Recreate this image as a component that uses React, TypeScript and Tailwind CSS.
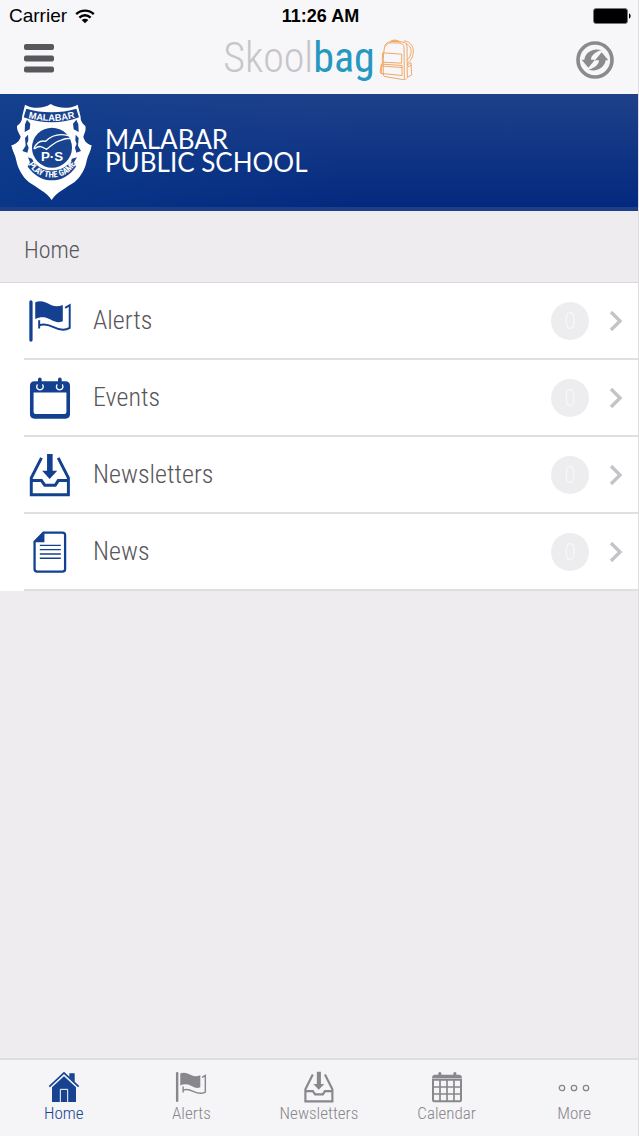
import type { ReactNode } from 'react';

interface IconProps {
  className?: string;
}

function WifiIcon({ className }: IconProps) {
  return (
    <svg className={className} viewBox="0 0 20 15" fill="none" stroke="currentColor" strokeWidth="2.4" aria-hidden="true">
      <path d="M1.2 5.2C6 0.4 14 0.4 18.8 5.2" />
      <path d="M4.4 8.6C7.6 5.5 12.4 5.5 15.6 8.6" />
      <path d="M10 14.2L6.7 10.9C8.6 9.2 11.4 9.2 13.3 10.9Z" fill="currentColor" stroke="none" />
    </svg>
  );
}

function BatteryIcon({ className }: IconProps) {
  return (
    <svg className={className} viewBox="0 0 39 16" aria-hidden="true">
      <rect x="0.5" y="0.5" width="34" height="15" rx="2.5" fill="#000" stroke="#77767a" />
      <path d="M36 5.5C38.2 6 38.2 10 36 10.5Z" fill="#000" />
    </svg>
  );
}

function MenuIcon({ className }: IconProps) {
  return (
    <svg className={className} viewBox="0 0 30 29" fill="currentColor" aria-hidden="true">
      <rect width="30" height="6" rx="2" />
      <rect y="11.5" width="30" height="6" rx="2" />
      <rect y="22.5" width="30" height="6" rx="2" />
    </svg>
  );
}

function RefreshIcon({ className }: IconProps) {
  return (
    <svg className={className} viewBox="0 0 114 114" aria-hidden="true">
      <circle cx="57" cy="57" r="51" fill="none" stroke="currentColor" strokeWidth="11" />
      <g fill="currentColor">
        <path d="M76 28C52 20 28 34 25 56H17L37 80L57 56H45C45 44 58 32 76 28Z" />
        <path d="M38 86C62 94 86 80 89 58H97L77 34L57 58H69C69 70 56 82 38 86Z" />
      </g>
    </svg>
  );
}

function BackpackIcon({ className }: IconProps) {
  return (
    <svg className={className} viewBox="504 116 108 128" fill="none" stroke="#efa35c" strokeWidth="2.8" strokeLinejoin="round" strokeLinecap="round" aria-hidden="true">
      <path d="M517 224C516 196 516 164 521 140C524 130 533 126 545 126L572 127C583 128 588 133 588 142L589 234C586 239 581 241 574 240L522 231C518 230 517 228 517 224Z" />
      <path d="M524 140C528 131 536 130 548 130L566 131C574 132 579 136 579 144L580 236" />
      <path d="M538 126C541 120 560 120 567 127M544 125C549 123 556 123 561 126" />
      <path d="M516 160L572 164V191L515 188Z" />
      <path d="M514 194L573 198V228L512 222Z" />
      <path d="M514 200L573 204M516 189L511 194L507 219L513 223" />
      <path d="M580 124C596 126 607 138 607 155C607 171 601 181 590 191M586 133C596 137 601 146 600 158C599 169 595 175 589 181" />
      <path d="M589 196L600 190L602 226L590 233M592 201L600 198" />
    </svg>
  );
}

function FlagIcon({ className }: IconProps) {
  return (
    <svg className={className} viewBox="84 252 134 134" aria-hidden="true">
      <path d="M93 261V377" stroke="currentColor" strokeWidth="10" strokeLinecap="round" />
      <path d="M106 262C122 255 137 261 151 269C164 276 177 275 190 270V320C176 326 165 322 151 314C136 306 121 306 106 313Z" fill="currentColor" />
      <path d="M197 279L211 271V340C194 350 176 345 160 337C144 329 131 327 118 332M118 317V342" fill="none" stroke="currentColor" strokeWidth="6" />
    </svg>
  );
}

function EventIcon({ className }: IconProps) {
  return (
    <svg className={className} viewBox="84 482 134 134" aria-hidden="true">
      <path fillRule="evenodd" fill="currentColor" d="M104 498H198Q212 498 212 512V598Q212 612 198 612H104Q90 612 90 598V512Q90 498 104 498ZM101 532V592Q101 598 107 598H195Q201 598 201 592V532Z" />
      <g fill="none" strokeLinecap="round">
        <path d="M112 509C108 518 113 524 120 524C128 524 133 518 129 509M172 509C168 518 173 524 180 524C188 524 193 518 189 509" stroke="#fff" strokeWidth="4" />
        <path d="M120 492V510M181 492V510" stroke="currentColor" strokeWidth="11" />
      </g>
    </svg>
  );
}

function InboxIcon({ className }: IconProps) {
  return (
    <svg className={className} viewBox="84 54 134 134" aria-hidden="true">
      <g fill="none" stroke="currentColor" strokeWidth="9">
        <path d="M125 69L94 130V181H207V130L176 69" />
        <path d="M94 138H125L135 152H167L176 138H207" />
      </g>
      <path d="M142 57H159V108H173L150 133L127 108H142Z" fill="currentColor" />
    </svg>
  );
}

function DocumentIcon({ className }: IconProps) {
  return (
    <svg className={className} viewBox="84 284 134 134" aria-hidden="true">
      <path d="M131 292H189Q197 292 197 300V403Q197 411 189 411H112Q104 411 104 403V320Z" fill="none" stroke="currentColor" strokeWidth="7" />
      <path d="M134 289V321H102Z" fill="currentColor" />
      <path d="M120 331H184M120 344H184M120 357H184M120 370H184" stroke="currentColor" strokeWidth="4" />
    </svg>
  );
}

function HouseIcon({ className }: IconProps) {
  return (
    <svg className={className} viewBox="147 66 96 96" aria-hidden="true">
      <path d="M211 73H227V100L211 84Z" fill="currentColor" />
      <path d="M151 113L195 72L239 113" fill="none" stroke="currentColor" strokeWidth="5" />
      <path d="M195 82L231 115V159H159V115Z" fill="currentColor" />
      <path d="M184 159V121H206V159" fill="none" stroke="#fff" strokeWidth="3" />
    </svg>
  );
}

function CalendarIcon({ className }: IconProps) {
  return (
    <svg className={className} viewBox="39 65 96 96" aria-hidden="true">
      <path d="M42 87Q42 76 51 76H61V71Q66 65 70 71V76H106V71Q111 65 115 71V76H123Q132 76 132 87Z" fill="currentColor" />
      <path d="M45 91H129V151Q129 156 123 156H51Q45 156 45 151Z" fill="none" stroke="currentColor" strokeWidth="6" />
      <path d="M66 91V156M87 91V156M108 91V156M45 113H129M45 134H129" stroke="currentColor" strokeWidth="5" />
    </svg>
  );
}

function MoreIcon({ className }: IconProps) {
  return (
    <svg className={className} viewBox="0 0 32 32" fill="none" stroke="currentColor" strokeWidth="1.3" aria-hidden="true">
      <circle cx="4" cy="17" r="2.7" />
      <circle cx="16" cy="17" r="2.7" />
      <circle cx="28" cy="17" r="2.7" />
    </svg>
  );
}

function ChevronIcon({ className }: IconProps) {
  return (
    <svg className={className} viewBox="0 0 14 20" fill="none" stroke="currentColor" strokeWidth="3.4" aria-hidden="true">
      <path d="M2 1L11 10L2 19" />
    </svg>
  );
}

function SchoolCrest({ className }: IconProps) {
  return (
    <svg className={className} viewBox="0 0 264 312" role="img" aria-label="Malabar Public School crest">
      <path
        fill="#fff"
        d="M51 17C77 31 106 29 128 15C152 29 182 31 209 17L218 54C217 66 224 74 232 81C235 94 229 104 226 113C229 128 240 136 251 139C249 156 240 168 236 185C232 209 219 232 199 250C174 267 145 281 131 303C116 281 88 267 63 250C43 232 30 209 25 185C22 168 13 156 10 139C22 136 34 128 38 113C34 104 26 94 27 81C36 74 43 66 42 54Z"
      />
      <g fill="#17438f">
        <path d="M55 29C100 43 160 43 205 29L213 55C162 75 100 75 47 55Z" />
        <path d="M57 62L67 74L65 91L50 99L51 76ZM205 62L195 74L197 91L212 99L211 76Z" />
        <path d="M51 117L60 107L61 124L57 134L62 146L58 161L43 156L53 140ZM212 117L203 107L202 124L206 134L201 146L205 161L219 156L210 140Z" />
        <path d="M72 179L60 175L66 190L59 203C80 232 107 244 131 244C157 244 184 232 204 203L198 190L207 175L192 179C182 204 155 214 131 214C109 214 84 204 72 179Z" />
        <circle cx="132" cy="146" r="60" />
      </g>
      <path
        d="M78 148C85 133 97 123 113 127C130 110 154 103 181 110M80 149C96 137 104 144 115 151C132 139 141 128 158 124C169 119 176 117 184 119"
        fill="none"
        stroke="#fff"
        strokeWidth="4"
        strokeLinecap="round"
      />
      <path id="crest-top" d="M50 54C105 70 158 70 212 53" fill="none" />
      <path id="crest-bottom" d="M62 197C91 249 173 249 203 195" fill="none" />
      <text fontSize="28" fontWeight="700" fill="#fff" textAnchor="middle" fontFamily="Liberation Sans, sans-serif">
        <textPath href="#crest-top" startOffset="50%">MALABAR</textPath>
      </text>
      <text x="132" y="187" fontSize="40" fontWeight="700" fill="#fff" textAnchor="middle" fontFamily="Liberation Sans, sans-serif">
        P·S
      </text>
      <text fontSize="26" fontWeight="700" fill="#fff" textAnchor="middle" fontFamily="Roboto Condensed, sans-serif">
        <textPath href="#crest-bottom" startOffset="50%">PLAY THE GAME</textPath>
      </text>
    </svg>
  );
}

const menuItems: { label: string; count: number; icon: ReactNode }[] = [
  { label: 'Alerts', count: 0, icon: <FlagIcon className="size-11" /> },
  { label: 'Events', count: 0, icon: <EventIcon className="size-11" /> },
  { label: 'Newsletters', count: 0, icon: <InboxIcon className="size-11" /> },
  { label: 'News', count: 0, icon: <DocumentIcon className="size-11" /> },
];

const tabs: { label: string; icon: ReactNode; active?: boolean }[] = [
  { label: 'Home', icon: <HouseIcon className="size-8" />, active: true },
  { label: 'Alerts', icon: <FlagIcon className="size-8" /> },
  { label: 'Newsletters', icon: <InboxIcon className="size-8" /> },
  { label: 'Calendar', icon: <CalendarIcon className="size-8" /> },
  { label: 'More', icon: <MoreIcon className="size-8" /> },
];

export default function App() {
  return (
    <div className="flex min-h-screen flex-col border-r border-[#dddce0] bg-[#eeecef] font-['Roboto_Condensed','Roboto',sans-serif] font-light text-[#57565a]">
      <header className="bg-[#f7f6f8]">
        {/* Status bar */}
        <div className="grid h-8 grid-cols-3 items-center pr-1.5 pl-[9px] font-['Liberation_Sans',sans-serif] text-[19px] font-normal text-black">
          <div className="flex items-center gap-2">
            <span>Carrier</span>
            <WifiIcon className="h-[15px] w-5" />
          </div>
          <span className="text-center text-lg font-bold">11:26 AM</span>
          <BatteryIcon className="h-4 w-[39px] justify-self-end" />
        </div>

        {/* Title bar */}
        <div className="flex h-[62px] items-start justify-between px-6">
          <button type="button" aria-label="Menu" className="mt-3 w-[38px] text-[#58575b]">
            <MenuIcon className="h-[29px] w-[30px]" />
          </button>
          <div className="flex items-start gap-1">
            <span className="text-[42px] leading-[52px] text-[#c6c5c9]">
              Skool<span className="font-normal text-[#2498c0]">bag</span>
            </span>
            <BackpackIcon className="mt-1.5 h-[43px] w-9" />
          </div>
          <button type="button" aria-label="Refresh" className="mt-[9px] text-[#8b8a8d]">
            <RefreshIcon className="size-[38px]" />
          </button>
        </div>
      </header>

      <div className="flex h-[117px] items-center gap-[9px] border-b-4 border-[#1c3f87] bg-[linear-gradient(to_right,#0d3f8f99,transparent_55%),linear-gradient(to_bottom,#1f418a,#03297f)] pl-2">
        <SchoolCrest className="h-[104px] w-[88px]" />
        <p className="font-['Lato',sans-serif] text-[26px] leading-[23px] font-normal text-white">
          MALABAR
          <br />
          PUBLIC SCHOOL
        </p>
      </div>

      <main className="grow">
        <h1 className="flex h-[71px] items-center px-6 pt-1.5 text-2xl">Home</h1>
        <ul className="border-t border-[#d9d8db] bg-white">
          {menuItems.map((item) => (
            <li key={item.label} className="pl-6">
              <a href="#" className="flex h-[77px] items-center border-b-2 border-[#dfdee1] pr-[15px] pl-1">
                <span className="text-[#13418f]">{item.icon}</span>
                <span className="grow pl-[21px] text-[26px]">{item.label}</span>
                <span className="flex size-[38px] items-center justify-center rounded-full bg-[#edecef] text-2xl text-[#f8f7fa]">
                  {item.count}
                </span>
                <ChevronIcon className="ml-5 h-5 w-3.5 text-[#c4c3c7]" />
              </a>
            </li>
          ))}
        </ul>
      </main>

      <nav className="grid h-[78px] grid-cols-5 border-t-2 border-[#dedde0] bg-[#f5f4f7]">
        {tabs.map((tab) => (
          <a
            key={tab.label}
            href="#"
            aria-current={tab.active ? 'page' : undefined}
            className={`flex flex-col items-center pt-[11px] text-[17px] leading-5 ${
              tab.active ? 'text-[#174391]' : 'text-[#88878b]'
            }`}
          >
            {tab.icon}
            <span>{tab.label}</span>
          </a>
        ))}
      </nav>
    </div>
  );
}
